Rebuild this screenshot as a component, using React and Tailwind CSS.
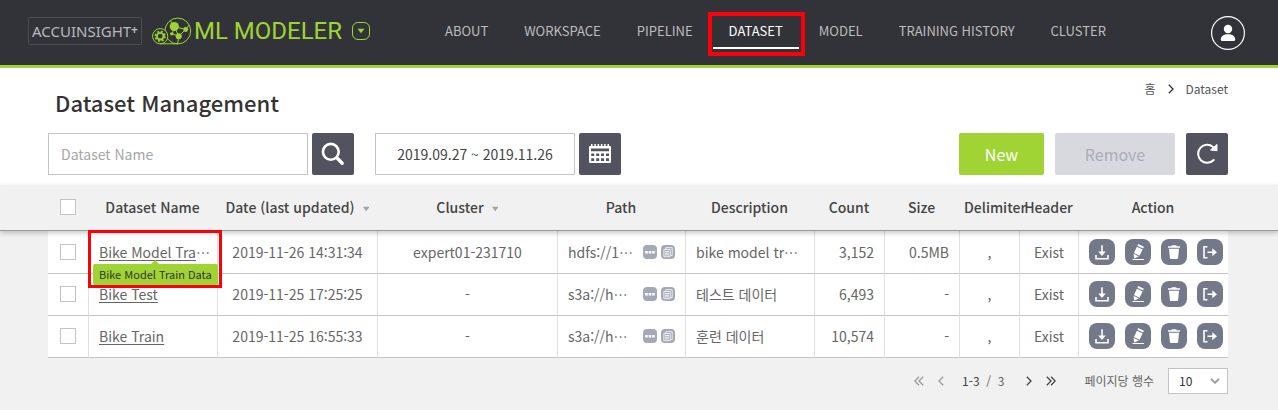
const NAV = ['ABOUT', 'WORKSPACE', 'PIPELINE', 'DATASET', 'MODEL', 'TRAINING HISTORY', 'CLUSTER'];

const ROWS = [
  { name: 'Bike Model Train Data', short: 'Bike Model Tra', date: '2019-11-26 14:31:34', cluster: 'expert01-231710', path: 'hdfs://1…', desc: 'bike model tr…', count: '3,152', size: '0.5MB' },
  { name: 'Bike Test', date: '2019-11-25 17:25:25', cluster: '-', path: 's3a://h…', desc: '테스트 데이터', count: '6,493', size: '-' },
  { name: 'Bike Train', date: '2019-11-25 16:55:33', cluster: '-', path: 's3a://h…', desc: '훈련 데이터', count: '10,574', size: '-' },
];

function Logo() {
  return (
    <svg className="ml-2.5 h-7 w-10" viewBox="0 0 40 28" fill="none" stroke="#9fd434" aria-hidden="true">
      <circle cx="25.800" cy="14" r="12.900" />
      <circle cx="8.200" cy="19.200" r="7.600" fill="#323338" />
      <path d="M8 26.800h18" />
      <circle cx="8.200" cy="19.200" r="3.300" strokeWidth="1.800" />
      <circle cx="8.200" cy="19.200" r="4.800" strokeWidth="1.600" strokeDasharray="2.100 1.670" />
      <path d="m22.300 9.500 11.400 3-7 6.700zM22.300 9.500l-2 7.300 6.400 2.400-1 7.500M33.700 12.500l3.500-4.500M22.300 9.500l-4-6M20.300 16.800l-2.300-.3" strokeWidth="1" />
      <g fill="#9fd434" stroke="none">
        <circle cx="22.300" cy="9.500" r="4.600" />
        <circle cx="33.700" cy="12.500" r="2.400" />
        <circle cx="26.700" cy="19.200" r="3" />
        <circle cx="19.800" cy="16.800" r="1.600" />
      </g>
    </svg>
  );
}

function Chevrons({ flip, double }) {
  return (
    <svg className="h-2.5 w-2.5" viewBox="0 0 10 10" fill="none" stroke="currentColor" strokeWidth="1.3" aria-hidden="true">
      <g transform={flip ? 'matrix(-1 0 0 1 10 0)' : undefined}>
        <path d={double ? 'M.800 .800 5 5 .800 9.200M5 .800 9.200 5 5 9.200' : 'M2.800 .800 7 5 2.800 9.200'} />
      </g>
    </svg>
  );
}

function Check({ label }) {
  return (
    <input
      type="checkbox"
      aria-label={label}
      className="block size-4 appearance-none border border-[#c4c4c4] bg-white checked:bg-[#9fd434]"
    />
  );
}

const SQUARE = 'flex size-[42px] items-center justify-center rounded-xs bg-[#51545f]';

const ACTIONS = [
  {
    label: 'Download',
    art: (
      <>
        <path d="M13 6.300v8" stroke="#fff" strokeWidth="1.600" />
        <path d="M9.300 12.500h7.400L13 17z" fill="#fff" />
        <path d="M7 16v3.800h12V16" stroke="#fff" strokeWidth="1.600" fill="none" />
      </>
    ),
  },
  {
    label: 'Edit',
    art: (
      <>
        <path d="m13.200 5 5.700 2.700-.800 1.700-5.700-2.700zM11.900 7.700l5.700 2.800-3.100 6.300-5.500-2.800z" fill="#fff" />
        <path d="m8.600 14.800 5.200 2.600-4.700 2.200z" fill="#fff" />
        <path d="M7.500 20.500h11.500" stroke="#fff" strokeWidth="1" />
      </>
    ),
  },
  {
    label: 'Delete',
    art: (
      <>
        <path d="M7 7.300h3.200l.800-1h4l.800 1H19v1.500H7z" fill="#fff" />
        <path d="M8 9.700h10l-.900 9.300q-.100 1-1.100 1h-6q-1 0-1.100-1z" fill="#fff" />
      </>
    ),
  },
  {
    label: 'Export',
    art: (
      <>
        <path d="M10.500 7.800H7v11h3.500M10.500 13.300h6" stroke="#fff" strokeWidth="1.600" fill="none" />
        <path d="m15.300 9.300 4.700 4-4.700 4z" fill="#fff" />
      </>
    ),
  },
];

function SortMark() {
  return (
    <svg className="ml-2 inline size-1.5" viewBox="0 0 6 6" aria-hidden="true">
      <path d="M0 .800h6.500L3.200 5.200z" fill="#a3a3a3" />
    </svg>
  );
}

const CELL = 'border-b border-b-[#c4c4c4] border-l border-l-[#e0e0e0] bg-white px-2.5 pb-px whitespace-nowrap';

function Row({ row }) {
  return (
    <tr className="h-[42px] first:h-[43px]">
      <td />
      <td className="border-b border-[#c4c4c4] bg-white pb-px pl-3"><Check label={`Select ${row.name}`} /></td>
      <td className={CELL}>
        <div className="relative leading-5">
          <a href="#dataset" className="underline underline-offset-2">{row.short ?? row.name}</a>
          {row.short && (
            <>
              …
              <div role="tooltip" className="absolute top-[22px] -left-1.5 z-20 rounded-xs bg-[#9fd434] px-1.5 text-[11px] leading-[21px] text-[#333]">
                <svg className="absolute -top-1 left-[58px] h-1 w-2" viewBox="0 0 8 4" aria-hidden="true"><path d="M4 0l4 4H0z" fill="#9fd434" /></svg>
                {row.name}
              </div>
              <div className="pointer-events-none absolute -top-3 -left-[11px] z-20 h-[58px] w-[134px] border-3 border-[#fb0007]" />
            </>
          )}
        </div>
      </td>
      <td className={`${CELL} text-center`}>{row.date}</td>
      <td className={`${CELL} text-center`}>{row.cluster}</td>
      <td className={CELL}>
        <div className="flex items-center gap-1">
          <span className="flex-1">{row.path}</span>
          <button type="button" aria-label="Show full path" className="size-3.5">
            <svg viewBox="0 0 14 14" aria-hidden="true">
              <rect width="14" height="14" rx="4" fill="#a4a9b8" />
              <path d="M2.200 6h2.600v2.500H2.200zM5.700 6h2.600v2.500H5.700zM9.200 6h2.600v2.500H9.200z" fill="#fff" />
            </svg>
          </button>
          <button type="button" aria-label="Copy path" className="size-3.5">
            <svg viewBox="0 0 14 14" fill="none" stroke="#fff" aria-hidden="true">
              <rect width="14" height="14" rx="4" fill="#a4a9b8" stroke="none" />
              <path d="M4.800 3.900V2.700h6.400v7.800H9.800" strokeWidth=".8" />
              <path d="M2.900 4.500h6.300v7.200H2.900z" strokeWidth=".8" />
              <path d="M4 6.500h4M4 8.200h4M4 9.900h4" strokeWidth=".9" />
            </svg>
          </button>
        </div>
      </td>
      <td className={CELL}>{row.desc}</td>
      <td className={`${CELL} text-right`}>{row.count}</td>
      <td className={`${CELL} text-right`}>{row.size}</td>
      <td className={`${CELL} text-center`}>,</td>
      <td className={`${CELL} text-center`}>Exist</td>
      <td className={CELL}>
        <div className="flex gap-2.5">
          {ACTIONS.map((a) => (
            <button key={a.label} type="button" aria-label={a.label} className="size-[26px] shrink-0 rounded-lg bg-[#737989]">
              <svg viewBox="0 0 26 26" fill="none" aria-hidden="true">{a.art}</svg>
            </button>
          ))}
        </div>
      </td>
      <td />
    </tr>
  );
}

export default function App() {
  return (
    <div lang="ko" className="min-h-screen bg-[#f1f1f1] font-['Noto_Sans_CJK_KR','Noto_Sans',sans-serif] text-sm text-[#666]">
      <header className="flex h-[68px] items-center justify-between border-b-3 border-[#9fd434] bg-[#323338] pr-[33px] pl-7">
        <div className="flex items-center pb-[3px]">
          <a href="#home" className="flex items-center">
            <span className="rounded-xs border border-[#4b4c51] px-[3px] font-['Noto_Sans',sans-serif] text-[15px] leading-[26px] text-[#b9b9bc]">
              ACCUINSIGHT<span className="align-[3px] text-xs leading-none font-bold">+</span>
            </span>
            <Logo />
            <span className="ml-0.5 font-[Roboto,sans-serif] text-2xl text-[#9fd434]">ML MODELER</span>
          </a>
          <button type="button" aria-label="Switch product" className="ml-2.5 flex size-[18px] items-center justify-center rounded-md border border-[#9fd434]">
            <svg className="h-1.5 w-2" viewBox="0 0 8 6" aria-hidden="true"><path d="M.500 .800h7L4 5.200z" fill="#9fd434" /></svg>
          </button>
          <nav className="ml-[59px] flex gap-1 text-[13px]">
            {NAV.map((item) => (
              <a
                key={item}
                href={`#${item.toLowerCase().replace(' ', '-')}`}
                aria-current={item === 'DATASET' ? 'page' : undefined}
                className="relative h-[35px] border-b-2 border-transparent px-4 leading-[34px] whitespace-nowrap text-[#bdbdbf] aria-[current=page]:border-white aria-[current=page]:text-white"
              >
                {item}
                {item === 'DATASET' && (
                  <span className="pointer-events-none absolute -top-[2px] -right-1.5 -left-[5px] h-11 border-4 border-[#fb0007]" />
                )}
              </a>
            ))}
          </nav>
        </div>
        <button type="button" aria-label="Account" className="size-[34px] shrink-0">
          <svg viewBox="0 0 34 34" aria-hidden="true">
            <circle cx="17" cy="17" r="16.400" fill="none" stroke="#fff" strokeWidth="1.200" />
            <circle cx="17" cy="13" r="4.200" fill="#fff" />
            <path d="M9.800 23.500c0-3.600 3-5.300 7.200-5.300s7.200 1.700 7.200 5.300q0 1.500-1.500 1.500H11.300q-1.500 0-1.500-1.500z" fill="#fff" />
          </svg>
        </button>
      </header>

      <main>
        <section className="bg-white pr-[50px] pb-2.5 pl-12">
          <div className="flex h-[65px] justify-between">
            <h1 className="pt-[18px] pl-[7px] text-[22px] leading-8 font-medium text-[#333]">Dataset Management</h1>
            <nav aria-label="Breadcrumb" className="flex h-[42px] items-center text-xs text-[#555]">
              <a href="#home">홈</a>
              <span className="mx-2.5 text-[#333]"><Chevrons /></span>
              <a href="#dataset">Dataset</a>
            </nav>
          </div>
          <div className="flex">
            <input aria-label="Dataset Name" placeholder="Dataset Name" className="h-[42px] w-[260px] border border-[#c4c4c4] px-3 placeholder:text-[#a6a6a6]" />
            <button type="button" aria-label="Search" className={`${SQUARE} ml-1`}>
              <svg className="size-6" viewBox="0 0 24 24" fill="none" stroke="#fff" strokeLinecap="round" aria-hidden="true">
                <circle cx="9.800" cy="9.800" r="7.900" strokeWidth="2.600" />
                <path d="m16.500 16.500 4.700 4.700" strokeWidth="3.400" />
              </svg>
            </button>
            <input aria-label="Date range" defaultValue="2019.09.27 ~ 2019.11.26" className="ml-[21px] h-[42px] w-[200px] border border-[#c4c4c4] text-center text-[#444]" />
            <button type="button" aria-label="Choose dates" className={`${SQUARE} ml-1`}>
              <svg className="h-5 w-6" viewBox="0 0 24 20" fill="#fff" aria-hidden="true">
                <path fillRule="evenodd" d="M1 3q0-1 1-1h20q1 0 1 1v15q0 1-1 1H2q-1 0-1-1zM3 4.500v2.800h18V4.500zM3.200 9.500v2.600h3V9.500zM8.200 9.500v2.600h3V9.500zM13 9.500v2.600h3V9.500zM18 9.500v2.600h3V9.500zM3.200 14.300v2.700h3v-2.700zM8.200 14.300v2.700h3v-2.700zM13 14.300v2.700h3v-2.700zM18 14.300v2.700h3v-2.700z" />
                <path d="M3 0h1.500v2H3zM6.300 0h1.500v2H6.300zM9.600 0h1.500v2H9.600zM12.900 0h1.500v2h-1.500zM16.200 0h1.500v2h-1.500zM19.500 0H21v2h-1.500z" />
              </svg>
            </button>
            <div className="ml-auto flex gap-[11px] text-base">
              <button type="button" className="h-[42px] w-[85px] rounded-xs bg-[#9fd434] text-white">New</button>
              <button type="button" disabled className="h-[42px] w-[120px] rounded-xs bg-[#d8d9df] text-[#a8acba]">Remove</button>
              <button type="button" aria-label="Refresh" className={SQUARE}>
                <svg className="size-6" viewBox="0 0 24 24" fill="none" aria-hidden="true">
                  <path d="M18.700 18A9 9 0 1 1 18 5" stroke="#fff" strokeWidth="2" strokeLinecap="round" />
                  <path d="m15.500 8 6.500.700V2.500z" fill="#fff" stroke="#fff" strokeWidth="1" strokeLinejoin="round" />
                </svg>
              </button>
            </div>
          </div>
        </section>

        <table className="w-full min-w-[1278px] table-fixed border-separate border-spacing-0">
          <colgroup>
            <col className="w-12" />
            <col className="w-10" />
            <col className="w-[129px]" />
            <col className="w-40" />
            <col className="w-[180px]" />
            <col className="w-32" />
            <col />
            <col className="w-[70px]" />
            <col className="w-[75px]" />
            <col className="w-[60px]" />
            <col className="w-[59px]" />
            <col className="w-[150px]" />
            <col className="w-[50px]" />
          </colgroup>
          <thead className="relative z-10 shadow-[0_2px_5px_rgba(0,0,0,0.22)]">
            <tr className="h-[46px] bg-[#f1f1f1] text-[#444] *:border-b *:border-[#999] *:px-[5px] *:pb-0.5 *:font-medium *:whitespace-nowrap">
              <td />
              <td className="pl-3!"><Check label="Select all" /></td>
              <th scope="col">Dataset Name</th>
              <th scope="col">Date (last updated)<SortMark /></th>
              <th scope="col">Cluster<SortMark /></th>
              <th scope="col">Path</th>
              <th scope="col">Description</th>
              <th scope="col">Count</th>
              <th scope="col">Size</th>
              <th scope="col">Delimiter</th>
              <th scope="col">Header</th>
              <th scope="col">Action</th>
              <td />
            </tr>
          </thead>
          <tbody>
            {ROWS.map((row) => <Row key={row.name} row={row} />)}
          </tbody>
        </table>

        <div className="flex items-center justify-end pt-2.5 pr-[50px] text-xs">
          <div className="flex items-center gap-3">
            <button type="button" aria-label="First page" className="text-[#999]"><Chevrons flip double /></button>
            <button type="button" aria-label="Previous page" className="text-[#999]"><Chevrons flip /></button>
            <span className="mr-2 ml-1 whitespace-pre"><span className="text-[#444]">1-3</span>  /  3</span>
            <button type="button" aria-label="Next page" className="text-[#444]"><Chevrons /></button>
            <button type="button" aria-label="Last page" className="text-[#444]"><Chevrons double /></button>
          </div>
          <label htmlFor="page-size" className="ml-7">페이지당 행수</label>
          <div className="relative ml-3.5">
            <select id="page-size" className="block h-[26px] w-[60px] appearance-none border border-[#c4c4c4] bg-white pl-2.5 text-[#333]">
              <option>10</option>
              <option>20</option>
              <option>50</option>
            </select>
            <svg className="pointer-events-none absolute top-2.5 right-2 h-1.5 w-2.5" viewBox="0 0 10 6" fill="none" stroke="#999" strokeWidth="1.800" aria-hidden="true"><path d="m1 .800 4 4 4-4" /></svg>
          </div>
        </div>
      </main>
    </div>
  );
}
